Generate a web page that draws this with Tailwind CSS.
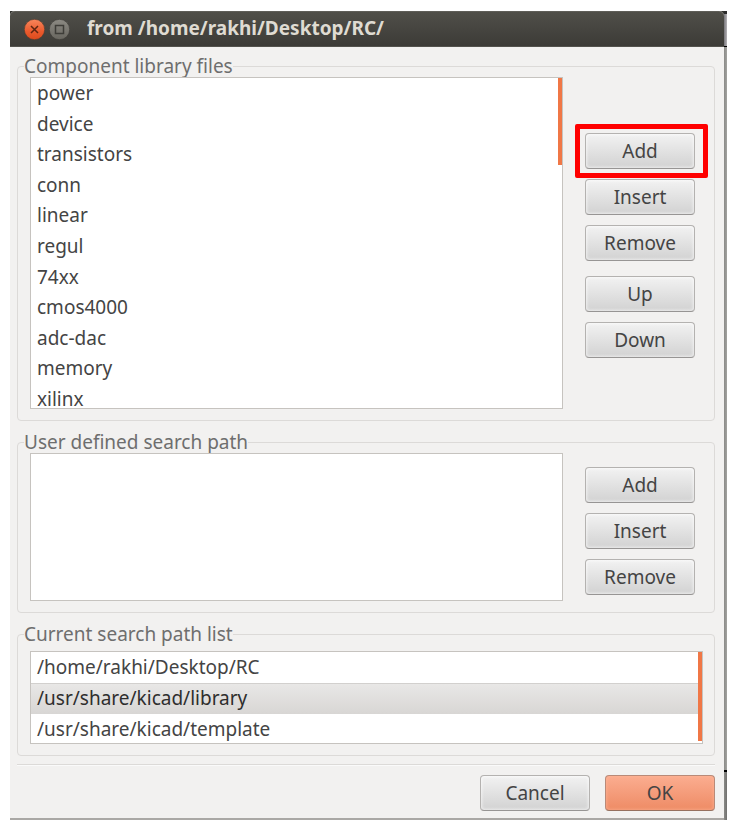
<!DOCTYPE html>
<html lang="en">
<head>
<meta charset="utf-8">
<title>from /home/rakhi/Desktop/RC/</title>
<script src="https://cdn.jsdelivr.net/npm/@tailwindcss/browser@4"></script>
</head>
<body class="bg-white pt-[11px] pr-[13px] pb-4 pl-[10px] font-['Noto_Sans',sans-serif] text-[19px] text-[#444444]">
<div class="flex bg-[#33332f]">
  <main class="min-w-0 flex-1 border-b-2 border-[#aaa8a5] bg-[#f2f1f0] rounded-t-[5px]">
    <header class="flex h-9 items-center rounded-t-[5px] border-t border-b border-t-[#5f5e58] border-b-[#53524d] bg-linear-to-b from-[#504f49] to-[#3c3b37] pl-[14px]">
      <button type="button" aria-label="Close" class="mr-1">
        <svg class="block" width="21" height="21" viewBox="0 0 21 21">
          <defs><linearGradient id="c" x1="0" y1="0" x2="0" y2="1"><stop offset="0" stop-color="#f8865c"/><stop offset=".6" stop-color="#ea5a2d"/><stop offset="1" stop-color="#dc4a1c"/></linearGradient></defs>
          <circle cx="10.500" cy="10.500" r="10.200" fill="url(#c)" stroke="#4a3a30" stroke-width=".600"/>
          <path d="M7 7l7 7M14 7l-7 7" stroke="#5c2511" stroke-width="1.500"/>
        </svg>
      </button>
      <button type="button" aria-label="Maximize" class="mr-[17px]">
        <svg class="block" width="21" height="21" viewBox="0 0 21 21">
          <defs><linearGradient id="m" x1="0" y1="0" x2="0" y2="1"><stop offset="0" stop-color="#8c8a83"/><stop offset="1" stop-color="#68665f"/></linearGradient></defs>
          <circle cx="10.500" cy="10.500" r="10.200" fill="url(#m)" stroke="#3a3934" stroke-width=".600"/>
          <rect x="6.500" y="6.500" width="8" height="8" fill="none" stroke="#3e3d38" stroke-width="1.500"/>
        </svg>
      </button>
      <h1 class="-mt-[2px] leading-6 font-bold whitespace-nowrap text-[#dfdbd2]">from /home/rakhi/Desktop/RC/</h1>
    </header>

    <form class="flex flex-col gap-[10px] pt-2 pr-[9px] pb-[7px] pl-[7px]" onsubmit="return false">
      <fieldset class="min-w-0 rounded border border-[#dcdad8] pr-[19px] pb-[11px] pl-3">
        <legend class="-ml-[6px] leading-[22px] whitespace-nowrap text-[#6e6e6e]">Component library files</legend>
        <div class="flex gap-[22px]">
          <div class="relative h-[332px] min-w-0 flex-1 overflow-hidden border border-[#c6c3bf] bg-white">
            <ul role="listbox" aria-label="Component library files" class="grid h-[336px] auto-rows-fr items-center pl-[6px] leading-6">
              <li role="option">power</li>
              <li role="option">device</li>
              <li role="option">transistors</li>
              <li role="option">conn</li>
              <li role="option">linear</li>
              <li role="option">regul</li>
              <li role="option">74xx</li>
              <li role="option">cmos4000</li>
              <li role="option">adc-dac</li>
              <li role="option">memory</li>
              <li role="option">xilinx</li>
            </ul>
            <div class="absolute top-0 right-0 h-[87px] w-1 bg-[#f07746]"></div>
          </div>
          <div class="flex w-[110px] flex-col gap-[10px] pt-[56px]">
            <div class="relative flex">
              <button type="button" class="h-9 flex-1 rounded border border-[#b4b2b0] border-b-[#979594] bg-linear-to-b from-[#f2f2f2] to-[#d2d2d2] shadow-[inset_0_0_3px_1px_rgba(255,255,255,0.6)]">Add</button>
              <div class="pointer-events-none absolute -inset-y-[9px] -right-[13px] -left-[10px] rounded-xs border-5 border-[#ff0000]"></div>
            </div>
            <button type="button" class="h-9 rounded border border-[#b4b2b0] border-b-[#979594] bg-linear-to-b from-[#f2f2f2] to-[#d2d2d2] shadow-[inset_0_0_3px_1px_rgba(255,255,255,0.6)]">Insert</button>
            <button type="button" class="h-9 rounded border border-[#b4b2b0] border-b-[#979594] bg-linear-to-b from-[#f2f2f2] to-[#d2d2d2] shadow-[inset_0_0_3px_1px_rgba(255,255,255,0.6)]">Remove</button>
            <button type="button" class="mt-[5px] h-9 rounded border border-[#b4b2b0] border-b-[#979594] bg-linear-to-b from-[#f2f2f2] to-[#d2d2d2] shadow-[inset_0_0_3px_1px_rgba(255,255,255,0.6)]">Up</button>
            <button type="button" class="h-9 rounded border border-[#b4b2b0] border-b-[#979594] bg-linear-to-b from-[#f2f2f2] to-[#d2d2d2] shadow-[inset_0_0_3px_1px_rgba(255,255,255,0.6)]">Down</button>
          </div>
        </div>
      </fieldset>

      <fieldset class="min-w-0 rounded border border-[#dcdad8] pr-[19px] pb-[11px] pl-3">
        <legend class="-ml-[6px] leading-[22px] whitespace-nowrap text-[#6e6e6e]">User defined search path</legend>
        <div class="flex gap-[22px]">
          <ul role="listbox" aria-label="User defined search path" class="h-[148px] min-w-0 flex-1 border border-[#c6c3bf] bg-white"></ul>
          <div class="flex w-[110px] flex-col gap-[10px] pt-[14px]">
            <button type="button" class="h-9 rounded border border-[#b4b2b0] border-b-[#979594] bg-linear-to-b from-[#f2f2f2] to-[#d2d2d2] shadow-[inset_0_0_3px_1px_rgba(255,255,255,0.6)]">Add</button>
            <button type="button" class="h-9 rounded border border-[#b4b2b0] border-b-[#979594] bg-linear-to-b from-[#f2f2f2] to-[#d2d2d2] shadow-[inset_0_0_3px_1px_rgba(255,255,255,0.6)]">Insert</button>
            <button type="button" class="h-9 rounded border border-[#b4b2b0] border-b-[#979594] bg-linear-to-b from-[#f2f2f2] to-[#d2d2d2] shadow-[inset_0_0_3px_1px_rgba(255,255,255,0.6)]">Remove</button>
          </div>
        </div>
      </fieldset>

      <fieldset class="min-w-0 rounded border border-[#dcdad8] pr-[11px] pb-[11px] pl-3">
        <legend class="-ml-[6px] leading-[22px] whitespace-nowrap text-[#6e6e6e]">Current search path list</legend>
        <div class="relative mt-[6px] h-[93px] overflow-hidden border border-[#c6c3bf] bg-white">
          <ul role="listbox" aria-label="Current search path list" class="leading-[31px]">
            <li role="option" class="h-[31px] pl-[6px]">/home/rakhi/Desktop/RC</li>
            <li role="option" aria-selected="true" class="h-[31px] bg-linear-to-b from-[#e9e8e7] to-[#d8d6d4] pl-[6px] text-[#2e2e2e] shadow-[inset_0_1px_0_#d2d0ce]">/usr/share/kicad/library</li>
            <li role="option" class="h-[31px] pl-[6px]">/usr/share/kicad/template</li>
          </ul>
          <div class="absolute top-0 right-0 bottom-[2px] w-1 bg-[#f07746]"></div>
        </div>
      </fieldset>

      <div class="-mt-[2px] flex justify-end gap-[15px] border-t border-[#dcdad8] pt-[10px] shadow-[inset_0_1px_0_#fafafa]">
        <button type="button" class="h-9 w-[110px] rounded border border-[#b4b2b0] border-b-[#979594] bg-linear-to-b from-[#f2f2f2] to-[#d2d2d2] shadow-[inset_0_0_3px_1px_rgba(255,255,255,0.6)]">Cancel</button>
        <button type="submit" class="h-9 w-[110px] rounded border border-[#b98a78] border-b-[#96705f] bg-linear-to-b from-[#fbad90] to-[#ee8b65] shadow-[inset_0_0_3px_1px_rgba(255,180,150,0.6)]">OK</button>
      </div>
    </form>
  </main>
  <div class="flex w-[3px] flex-col" aria-hidden="true">
    <div class="h-[3px] bg-[#2b2b2b]"></div>
    <div class="h-8 bg-linear-to-r from-[#77767a] to-[#b5b3b7]"></div>
    <div class="h-px bg-black"></div>
    <div class="flex-1 bg-linear-to-r from-[#8a8a87] to-[#a3a3a0]"></div>
    <div class="h-[2px] bg-black"></div>
    <div class="h-12 bg-linear-to-r from-[#8a8a87] to-[#70706e]"></div>
  </div>
</div>
</body>
</html>
